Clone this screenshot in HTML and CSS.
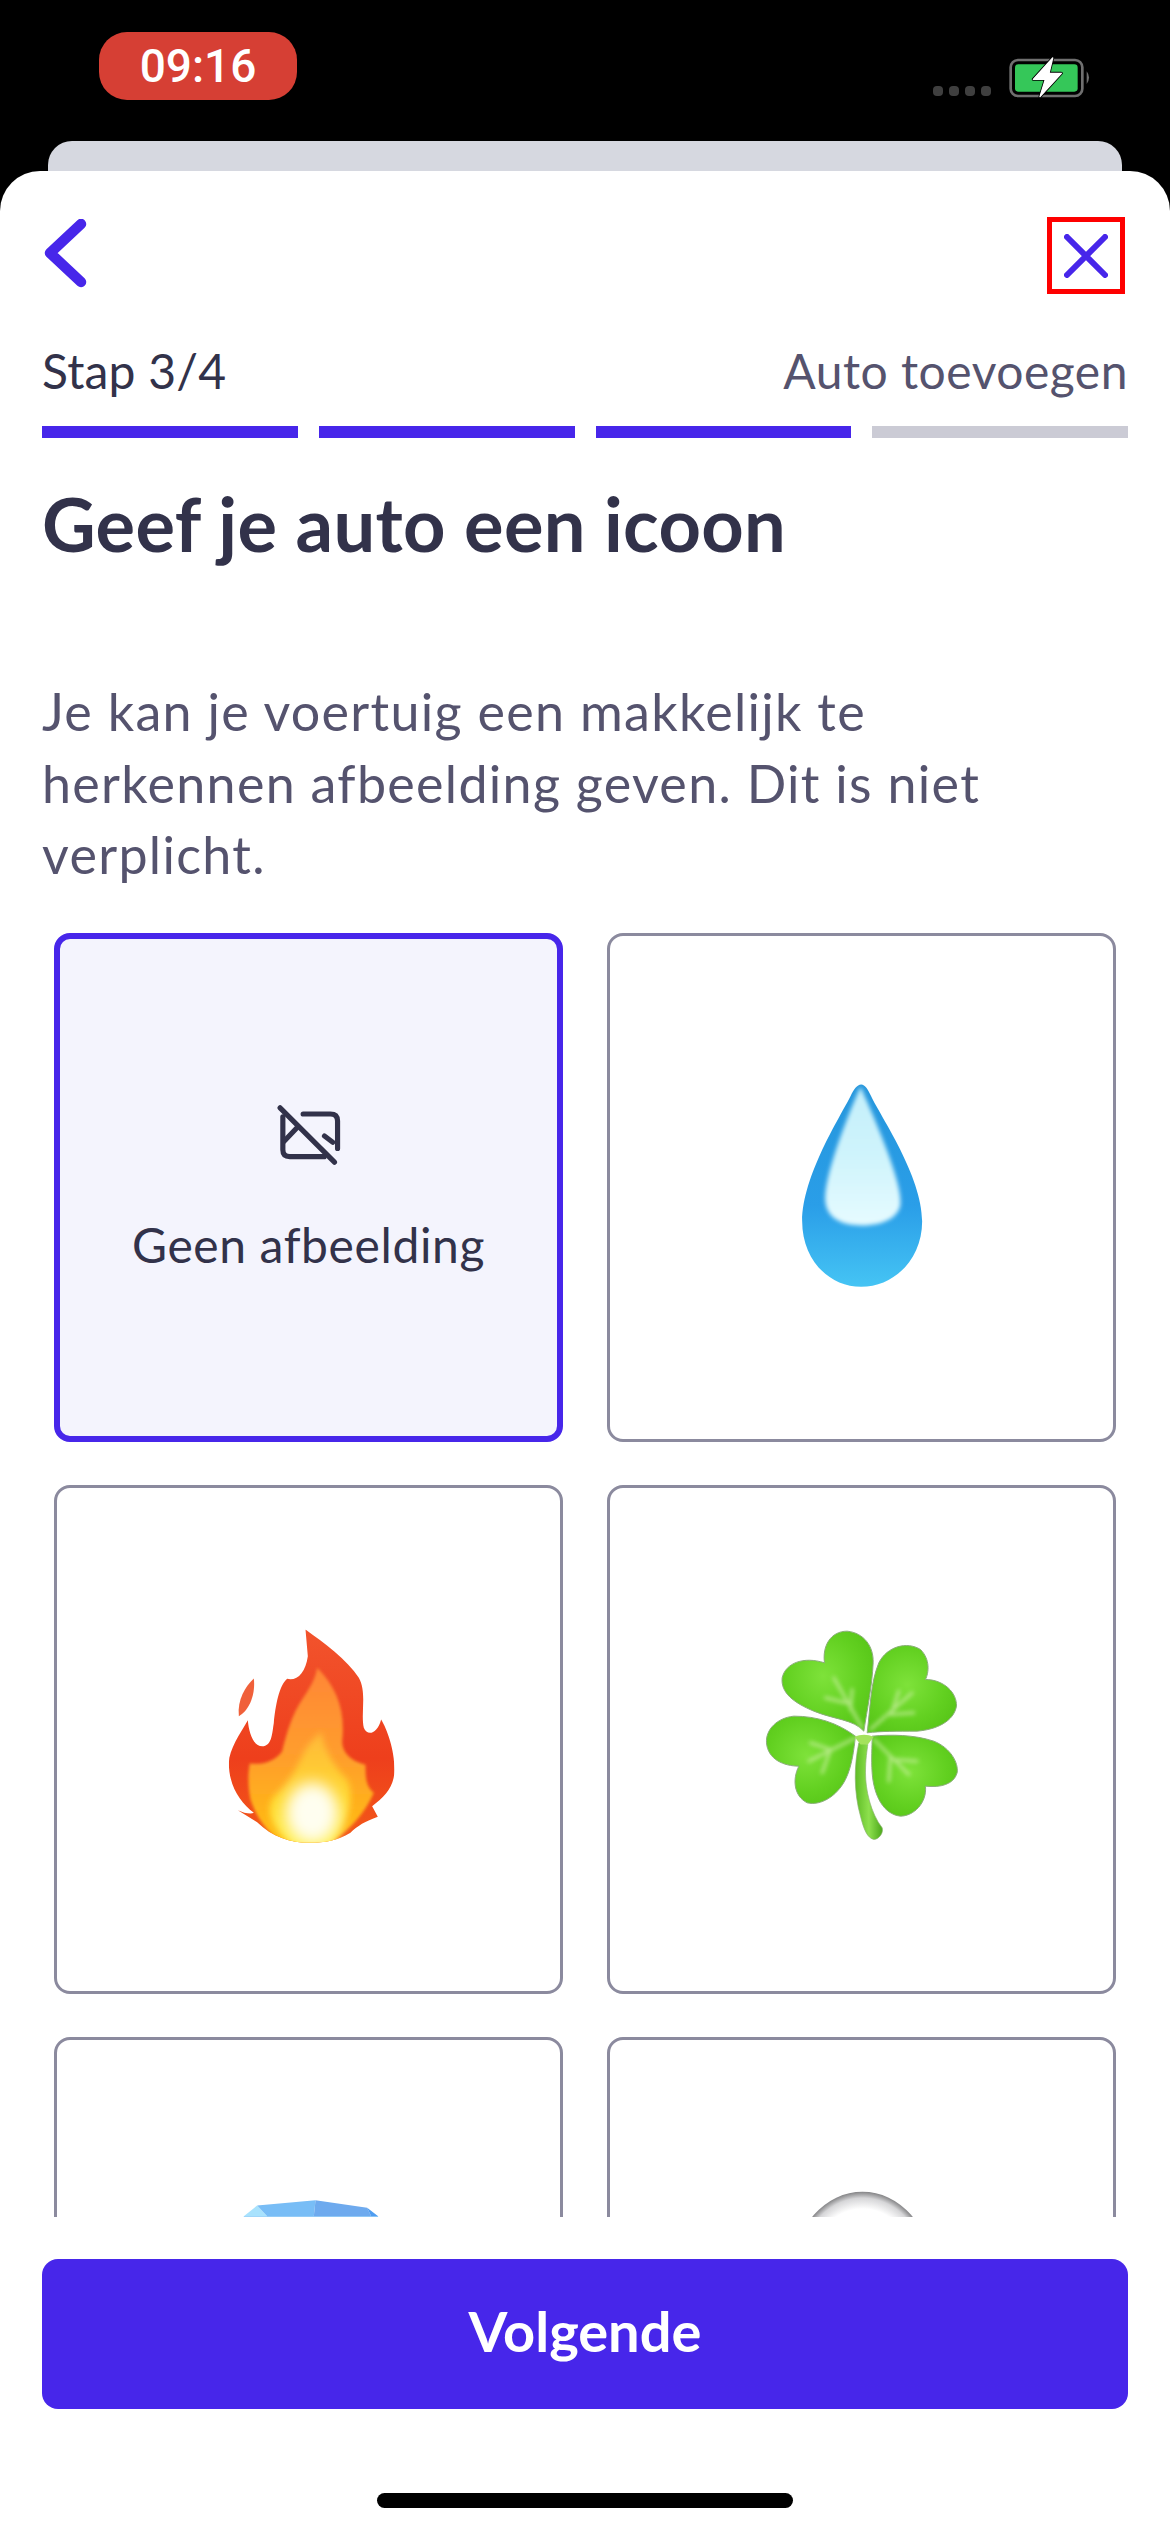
FILE: index.html
```html
<!DOCTYPE html>
<html lang="nl">
<head>
<meta charset="utf-8">
<title>Auto toevoegen</title>
<link rel="stylesheet" href="styles.css">
</head>
<body>
<header class="status">
  <div class="time">09:16</div>
  <div class="status-right">
    <div class="dots"><i></i><i></i><i></i><i></i></div>
    <svg class="battery" viewBox="327 48 246 126">
      <rect x="332" y="60" width="215" height="108" rx="22" fill="none" stroke="#6f6f6f" stroke-width="8"/>
      <rect x="345" y="73" width="188" height="82" rx="10" fill="#35c759"/>
      <path d="M560 94Q574 112 560 132Z" fill="#6f6f6f"/>
      <path d="M458 54L400 118H436L420 170L484 100H447Z" fill="#fff" stroke="#000" stroke-width="9" stroke-linejoin="round" paint-order="stroke"/>
      <path d="M458 54L400 118H436L420 170L484 100H447Z" fill="#fff" stroke="#fff" stroke-width="4" stroke-linejoin="round"/>
    </svg>
  </div>
</header>
<div class="back-sheet"></div>
<main class="sheet">
  <nav class="nav">
    <svg class="chevron" viewBox="44 219 44 70"><path d="M81 224L50 253L81 282" fill="none" stroke="#4726ea" stroke-width="10.5" stroke-linecap="round" stroke-linejoin="round"/></svg>
    <button class="close">
      <svg class="close-x" viewBox="0 0 44 44"><path d="M3 3L41 41M41 3L3 41" fill="none" stroke="#4726ea" stroke-width="6" stroke-linecap="round"/></svg>
    </button>
  </nav>
  <div class="step-row"><span class="step">Stap 3/4</span><span class="flow-name">Auto toevoegen</span></div>
  <div class="progress"><i class="on"></i><i class="on"></i><i class="on"></i><i></i></div>
  <h1 class="title">Geef je auto een icoon</h1>
  <p class="desc">Je kan je voertuig een makkelijk te<br>herkennen afbeelding geven. Dit is niet<br>verplicht.</p>
  <div class="grid-clip">
    <div class="grid">
      <div class="card selected">
        <svg class="no-image" viewBox="688 528 186 186">
          <g fill="none" stroke="#32324a" stroke-width="15" stroke-linecap="round" stroke-linejoin="round">
            <path d="M697 542L855 700"/>
            <path d="M764 560H843Q864 560 864 580V660"/>
            <path d="M705 568V664Q705 684 725 684H825"/>
            <path d="M708 640L746 600"/>
            <path d="M826 624L850 642"/>
          </g>
        </svg>
        <span class="card-label">Geen afbeelding</span>
      </div>

      <div class="card">
        <svg class="emoji" viewBox="0 0 240 240">
          <defs>
            <linearGradient id="dropBase" x1="0" y1="0" x2="0" y2="1">
              <stop offset="0" stop-color="#2596dc"/><stop offset=".6" stop-color="#2a9ee8"/><stop offset="1" stop-color="#45c4f4"/>
            </linearGradient>
            <linearGradient id="dropHi" x1="0" y1="0" x2="0" y2="1">
              <stop offset="0" stop-color="#c4effb"/><stop offset=".5" stop-color="#cff4fc"/><stop offset="1" stop-color="#e6fbff"/>
            </linearGradient>
            <filter id="blur12" x="-30%" y="-30%" width="160%" height="160%"><feGaussianBlur stdDeviation="6"/></filter>
          </defs>
          <g transform="translate(-1.5 -17.5) scale(.3333)">
            <path d="M362 105C350 105 340 120 330 140C300 200 185 380 185 515C185 630 265 712 362 712C460 712 545 630 545 515C545 380 420 200 392 140C382 120 374 105 362 105Z" fill="url(#dropBase)"/>
            <path d="M360 112C325 190 245 390 255 460C262 510 310 528 362 528C420 528 472 510 480 465C488 400 395 190 360 112Z" fill="url(#dropHi)" filter="url(#blur12)"/>
          </g>
        </svg>
      </div>

      <div class="card">
        <svg class="emoji" viewBox="0 0 240 240">
          <defs>
            <linearGradient id="fireOuter" x1="0" y1="0" x2="0" y2="1">
              <stop offset="0" stop-color="#f2542d"/><stop offset=".6" stop-color="#ee3f1c"/><stop offset="1" stop-color="#f35a18"/>
            </linearGradient>
            <linearGradient id="fireMid" x1="0" y1="0" x2="0" y2="1">
              <stop offset="0" stop-color="#ff8636"/><stop offset=".5" stop-color="#ff9e2c"/><stop offset="1" stop-color="#ffc00d"/>
            </linearGradient>
            <linearGradient id="fireIn" x1="0" y1="0" x2="0" y2="1">
              <stop offset="0" stop-color="#ffb83a"/><stop offset=".6" stop-color="#ffd92e"/><stop offset="1" stop-color="#fff04a"/>
            </linearGradient>
            <filter id="blurCore" x="-60%" y="-60%" width="220%" height="220%"><feGaussianBlur stdDeviation="22"/></filter>
            <filter id="blurIn" x="-30%" y="-30%" width="160%" height="160%"><feGaussianBlur stdDeviation="9"/></filter>
            <filter id="blurMid" x="-20%" y="-20%" width="140%" height="140%"><feGaussianBlur stdDeviation="4"/></filter>
            <clipPath id="fireClip"><path d="M345 90C400 130 470 180 505 235C530 280 510 340 520 385C530 410 560 405 572 360C590 390 612 450 612 510C612 560 585 590 545 620L562 652C525 665 500 680 480 700C440 725 400 730 360 730C300 730 245 712 200 668L142 632C160 640 180 645 190 640C150 610 115 560 115 490C115 450 150 400 172 362C175 400 190 445 220 440C245 435 245 400 250 370C255 320 265 260 290 238C320 245 345 220 352 170Z"/></clipPath>
          </defs>
          <g transform="translate(1.5 -19.5) scale(.3333)">
            <path d="M190 237C195 280 180 330 145 350C140 300 165 260 190 237Z" fill="#f0603a"/>
            <g clip-path="url(#fireClip)">
              <rect x="100" y="80" width="530" height="660" fill="url(#fireOuter)"/>
              <path d="M380 205C440 265 465 335 455 425C455 470 500 490 525 495C525 530 525 560 550 580C520 650 460 710 400 740H300C240 715 200 660 180 600C172 560 172 520 178 492C215 497 255 485 275 455C290 395 305 345 335 300C355 270 375 240 380 205Z" fill="url(#fireMid)" filter="url(#blurMid)"/>
              <path d="M392 395C400 450 430 500 470 540C495 590 470 670 420 740H310C260 700 215 640 250 590C300 550 325 490 345 450C360 425 380 410 392 395Z" fill="url(#fireIn)" filter="url(#blurIn)"/>
              <ellipse cx="365" cy="640" rx="80" ry="92" fill="#fffef0" filter="url(#blurCore)"/>
            </g>
          </g>
        </svg>
      </div>

      <div class="card">
        <svg class="emoji" viewBox="0 0 240 240">
          <defs>
            <radialGradient id="leaf" cx=".45" cy=".45" r=".7">
              <stop offset="0" stop-color="#7ee23a"/><stop offset=".6" stop-color="#62d020"/><stop offset="1" stop-color="#54c216"/>
            </radialGradient>
            <linearGradient id="stem" x1="0" y1="0" x2="1" y2="0">
              <stop offset="0" stop-color="#5ebc25"/><stop offset=".5" stop-color="#8ee04e"/><stop offset="1" stop-color="#4ba81a"/>
            </linearGradient>
            <filter id="blurVein" x="-20%" y="-20%" width="140%" height="140%"><feGaussianBlur stdDeviation="6"/></filter>
          </defs>
          <g transform="translate(-11.5 -19.5) scale(.3333)">
            <path d="M385 430C370 500 370 580 390 650C400 690 410 715 430 720C445 720 460 700 455 685C420 640 405 570 405 520C405 480 410 450 412 435Z" fill="url(#stem)" stroke="#8bb071" stroke-width="2"/>
            <g fill="url(#leaf)" stroke="#8aad78" stroke-width="3">
              <path d="M400 395C370 360 310 360 250 335C190 310 150 280 155 235C165 190 220 170 282 190C275 140 300 95 350 95C400 100 430 140 428 190C425 260 410 330 400 395Z"/>
              <path d="M410 400C420 320 420 250 445 190C470 140 530 125 570 150C600 180 595 220 585 240C640 240 680 280 678 320C670 365 620 390 560 395C500 395 450 395 410 400Z"/>
              <path d="M375 410C320 370 260 350 190 350C140 355 105 390 108 430C112 480 160 500 205 500C185 540 190 590 230 610C270 620 320 590 345 540C365 500 370 450 375 410Z"/>
              <path d="M425 410C480 405 550 405 610 425C660 445 685 490 680 520C670 555 630 565 585 560C590 610 550 650 510 650C460 645 430 590 425 520C422 480 425 440 425 410Z"/>
            </g>
            <g fill="none" stroke="#cdf0a4" stroke-width="9" stroke-linecap="round" filter="url(#blurVein)" opacity=".75">
              <path d="M395 385L310 235M345 310L285 295M360 330L365 270"/>
              <path d="M420 390L545 280M485 335L505 275M480 345L550 340"/>
              <path d="M375 415L235 485M300 450L240 430M300 450L275 520"/>
              <path d="M430 420L535 525M480 470L475 545M490 480L560 485"/>
            </g>
            <path d="M372 412Q400 400 430 412L412 435H390Z" fill="#a4e25c"/>
          </g>
        </svg>
      </div>

      <div class="card">
        <svg class="emoji" viewBox="0 0 240 240">
          <g transform="translate(11.5 -1.5) scale(.3333)">
            <path d="M130 140L533 140L520 500H140Z" fill="#7cc3f7"/>
            <path d="M130 140L170 108L200 140Z" fill="#a8e2fd"/>
            <path d="M170 108L345 92L340 140H200Z" fill="#78bdf6"/>
            <path d="M345 92L500 115L512 140H340Z" fill="#6eaaee"/>
            <path d="M500 115L533 140H512Z" fill="#4f9df0"/>
          </g>
        </svg>
      </div>

      <div class="card">
        <svg class="emoji" viewBox="0 0 240 240">
          <defs>
            <radialGradient id="egg" cx=".5" cy=".5" r=".5">
              <stop offset="0" stop-color="#fff"/><stop offset=".78" stop-color="#fff"/><stop offset=".92" stop-color="#d6d6d8"/><stop offset="1" stop-color="#858587"/>
            </radialGradient>
          </defs>
          <g transform="translate(28.5 -1.5) scale(.3333)">
            <ellipse cx="276" cy="300" rx="205" ry="233" fill="url(#egg)"/>
          </g>
        </svg>
      </div>
    </div>
  </div>
  <button class="next">Volgende</button>
  <div class="home"></div>
</main>
</body>
</html>
```
FILE: styles.css
```css
* { box-sizing: border-box; }
html, body { margin: 0; padding: 0; }
body {
  width: 1170px;
  height: 2532px;
  background: #000;
  font-family: "Lato", "Noto Sans", sans-serif;
  overflow: hidden;
}
.status {
  height: 141px;
  display: flex;
  align-items: flex-start;
  padding: 32px 79px 0 99px;
}
.time {
  width: 198px;
  height: 68px;
  border-radius: 28px;
  background: #d63f34;
  color: #fff;
  font-family: "Roboto", sans-serif;
  font-weight: 500;
  font-size: 46px;
  line-height: 68px;
  text-align: center;
}
.status-right {
  margin-left: auto;
  margin-top: 24px;
  height: 42px;
  display: flex;
  gap: 18px;
}
.dots {
  display: flex;
  gap: 6px;
  align-self: flex-end;
  margin-bottom: 2px;
}
.dots i {
  width: 10px;
  height: 10px;
  border-radius: 4px;
  background: #3f3f3f;
}
.battery { width: 82px; height: 42px; }
.back-sheet {
  height: 30px;
  margin: 0 48px;
  background: #d6d8e0;
  border-radius: 24px 24px 0 0;
}
.sheet {
  height: 2361px;
  background: #fff;
  border-radius: 40px 40px 0 0;
  padding: 45px 42px 24px;
  display: flex;
  flex-direction: column;
}
.nav {
  height: 78px;
  flex: none;
  display: flex;
  justify-content: space-between;
  align-items: flex-start;
}
.chevron {
  width: 44px;
  height: 70px;
  margin: 3px 0 0 2px;
}
.close {
  width: 78px;
  height: 77px;
  margin: 1px 3px 0 0;
  padding: 0;
  border: 5px solid #fe0000;
  background: #fff;
  display: flex;
  align-items: center;
  justify-content: center;
}
.close-x { width: 44px; height: 44px; }
.step-row {
  margin-top: 47px;
  height: 60px;
  flex: none;
  line-height: 60px;
  font-size: 48px;
  display: flex;
  justify-content: space-between;
}
.step { color: #32324a; letter-spacing: .2px; }
.flow-name { color: #55536e; letter-spacing: .5px; }
.progress {
  margin-top: 25px;
  height: 12px;
  flex: none;
  display: flex;
  gap: 21px;
}
.progress i {
  flex: 1;
  background: #cbcbd5;
}
.progress i.on { background: #4726ea; }
.title {
  margin: 44px 0 0;
  flex: none;
  font-size: 74px;
  line-height: 84px;
  font-weight: 700;
  color: #32324a;
  letter-spacing: .3px;
}
.desc {
  margin: 110px 0 0;
  flex: none;
  font-size: 52px;
  line-height: 71.5px;
  color: #55536e;
  letter-spacing: 1.3px;
  white-space: nowrap;
}
.grid-clip {
  margin-top: 42px;
  height: 1284px;
  flex: none;
  overflow: hidden;
  padding: 0 12px;
}
.grid {
  display: grid;
  grid-template-columns: 509px 509px;
  grid-auto-rows: 509px;
  gap: 43px 44px;
}
.card {
  border: 3px solid #8b8a9e;
  border-radius: 16px;
  background: #fff;
  display: flex;
  flex-direction: column;
  align-items: center;
  justify-content: center;
}
.card.selected {
  border: 6px solid #4726ea;
  background: #f4f4fd;
  padding-top: 3px;
}
.no-image { width: 64px; height: 64px; flex: none; }
.card-label {
  margin-top: 48px;
  font-size: 48px;
  line-height: 60px;
  color: #32324a;
  letter-spacing: .6px;
}
.emoji { width: 240px; height: 240px; flex: none; overflow: visible; }
.next {
  margin-top: 42px;
  height: 150px;
  flex: none;
  border: 0;
  padding: 0 0 6px;
  border-radius: 16px;
  background: #4726ea;
  color: #fff;
  font-family: inherit;
  font-size: 56px;
  font-weight: 700;
}
.home {
  margin: 84px auto 0;
  width: 416px;
  height: 15px;
  flex: none;
  border-radius: 8px;
  background: #000;
}
```
